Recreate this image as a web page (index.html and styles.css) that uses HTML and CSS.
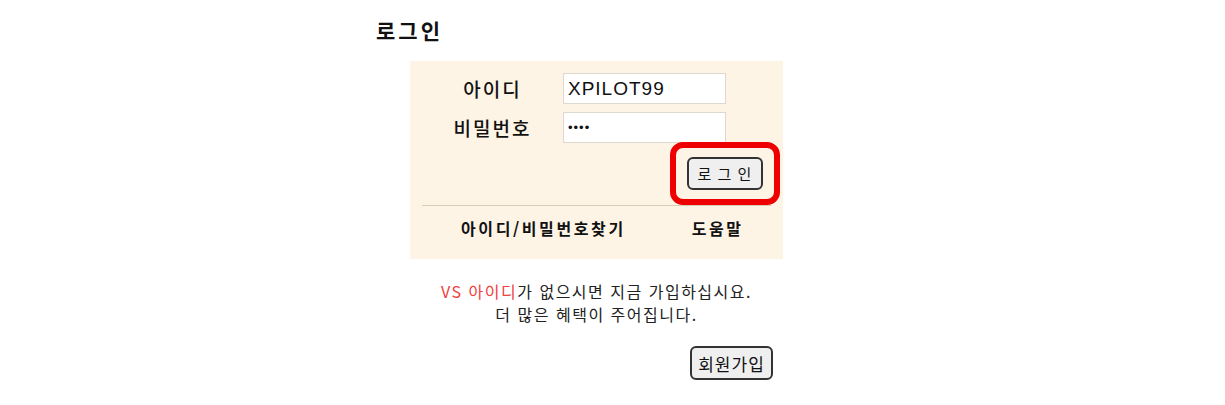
FILE: index.html
```html
<!DOCTYPE html>
<html lang="ko">
<head>
  <meta charset="UTF-8">
  <title>로그인</title>
  <link rel="stylesheet" href="styles.css">
</head>
<body>
  <div class="page">
    <h2 class="title">로그인</h2>
    <div class="login-box">
      <div class="fields">
        <label class="field-label" for="uid">아이디</label>
        <input class="field-input" id="uid" type="text" value="XPILOT99">
        <label class="field-label" for="upw">비밀번호</label>
        <input class="field-input pw" id="upw" type="password" value="1234">
      </div>
      <div class="submit-row">
        <span class="highlight">
          <button class="btn btn-login">로 그 인</button>
        </span>
      </div>
      <div class="links">
        <a class="link-find">아이디/비밀번호찾기</a>
        <a class="link-help">도움말</a>
      </div>
    </div>
    <p class="notice">
      <span class="red">VS 아이디</span>가 없으시면 지금 가입하십시요.<br>
      더 많은 혜택이 주어집니다.
    </p>
    <div class="join-row">
      <button class="btn btn-join">회원가입</button>
    </div>
  </div>
</body>
</html>
```

FILE: styles.css
```css
body {
  margin: 8px;
  font-family: "Noto Sans CJK KR", "Liberation Sans", sans-serif;
  color: #111;
  background: #fff;
}
.page {
  margin-left: 368px;
  width: 407px;
}
.title {
  margin: 7px 0 0 0;
  font-size: 21px;
  line-height: 30px;
  font-weight: bold;
  letter-spacing: 3px;
}
.login-box {
  margin: 16px 0 0 34px;
  width: 373px;
  height: 198px;
  background: #fdf4e6;
  box-sizing: border-box;
  padding: 12px 12px 0 12px;
}
.fields {
  display: grid;
  grid-template-columns: 141px 163px;
  row-gap: 8px;
  align-items: center;
}
.field-label {
  text-align: center;
  font-size: 19px;
  font-weight: 500;
  letter-spacing: 2px;
}
.field-input {
  box-sizing: border-box;
  height: 31px;
  border: 1px solid #ddd8d0;
  background: #fff;
  padding: 0 4px;
  font-family: "Liberation Sans", sans-serif;
  font-size: 19px;
  letter-spacing: 1px;
  color: #111;
  outline: none;
}
.field-input.pw {
  font-size: 13px;
  letter-spacing: 1px;
}
.submit-row {
  display: flex;
  justify-content: flex-end;
  margin-top: -1px;
  height: 63px;
  align-items: center;
}
.highlight {
  display: inline-flex;
  align-items: center;
  justify-content: center;
  width: 110px;
  height: 63px;
  box-sizing: border-box;
  border: 6px solid #ee0000;
  border-radius: 13px;
  margin-right: -9px;
}
.btn {
  font-family: "Noto Sans CJK KR", sans-serif;
  background: #efefef;
  border: 2px solid #333;
  border-radius: 6px;
  color: #111;
  padding: 0;
  cursor: pointer;
}
.btn-login {
  width: 76px;
  height: 33px;
  font-size: 15px;
  letter-spacing: 1px;
}
.links {
  border-top: 1px solid #d9cdb8;
  display: flex;
  height: 44px;
  align-items: center;
  font-size: 16px;
  font-weight: bold;
  letter-spacing: 2.6px;
}
.link-find {
  margin-left: 39px;
}
.link-help {
  margin-left: 66px;
}
.notice {
  margin: 21px 0 0 34px;
  width: 373px;
  text-align: center;
  font-size: 16px;
  line-height: 23px;
  letter-spacing: 1.5px;
  color: #222;
}
.red {
  color: #f04040;
}
.join-row {
  display: flex;
  justify-content: flex-end;
  margin-top: 20px;
  padding-right: 10px;
}
.btn-join {
  width: 83px;
  height: 34px;
  font-size: 17px;
  letter-spacing: 1px;
}
```
